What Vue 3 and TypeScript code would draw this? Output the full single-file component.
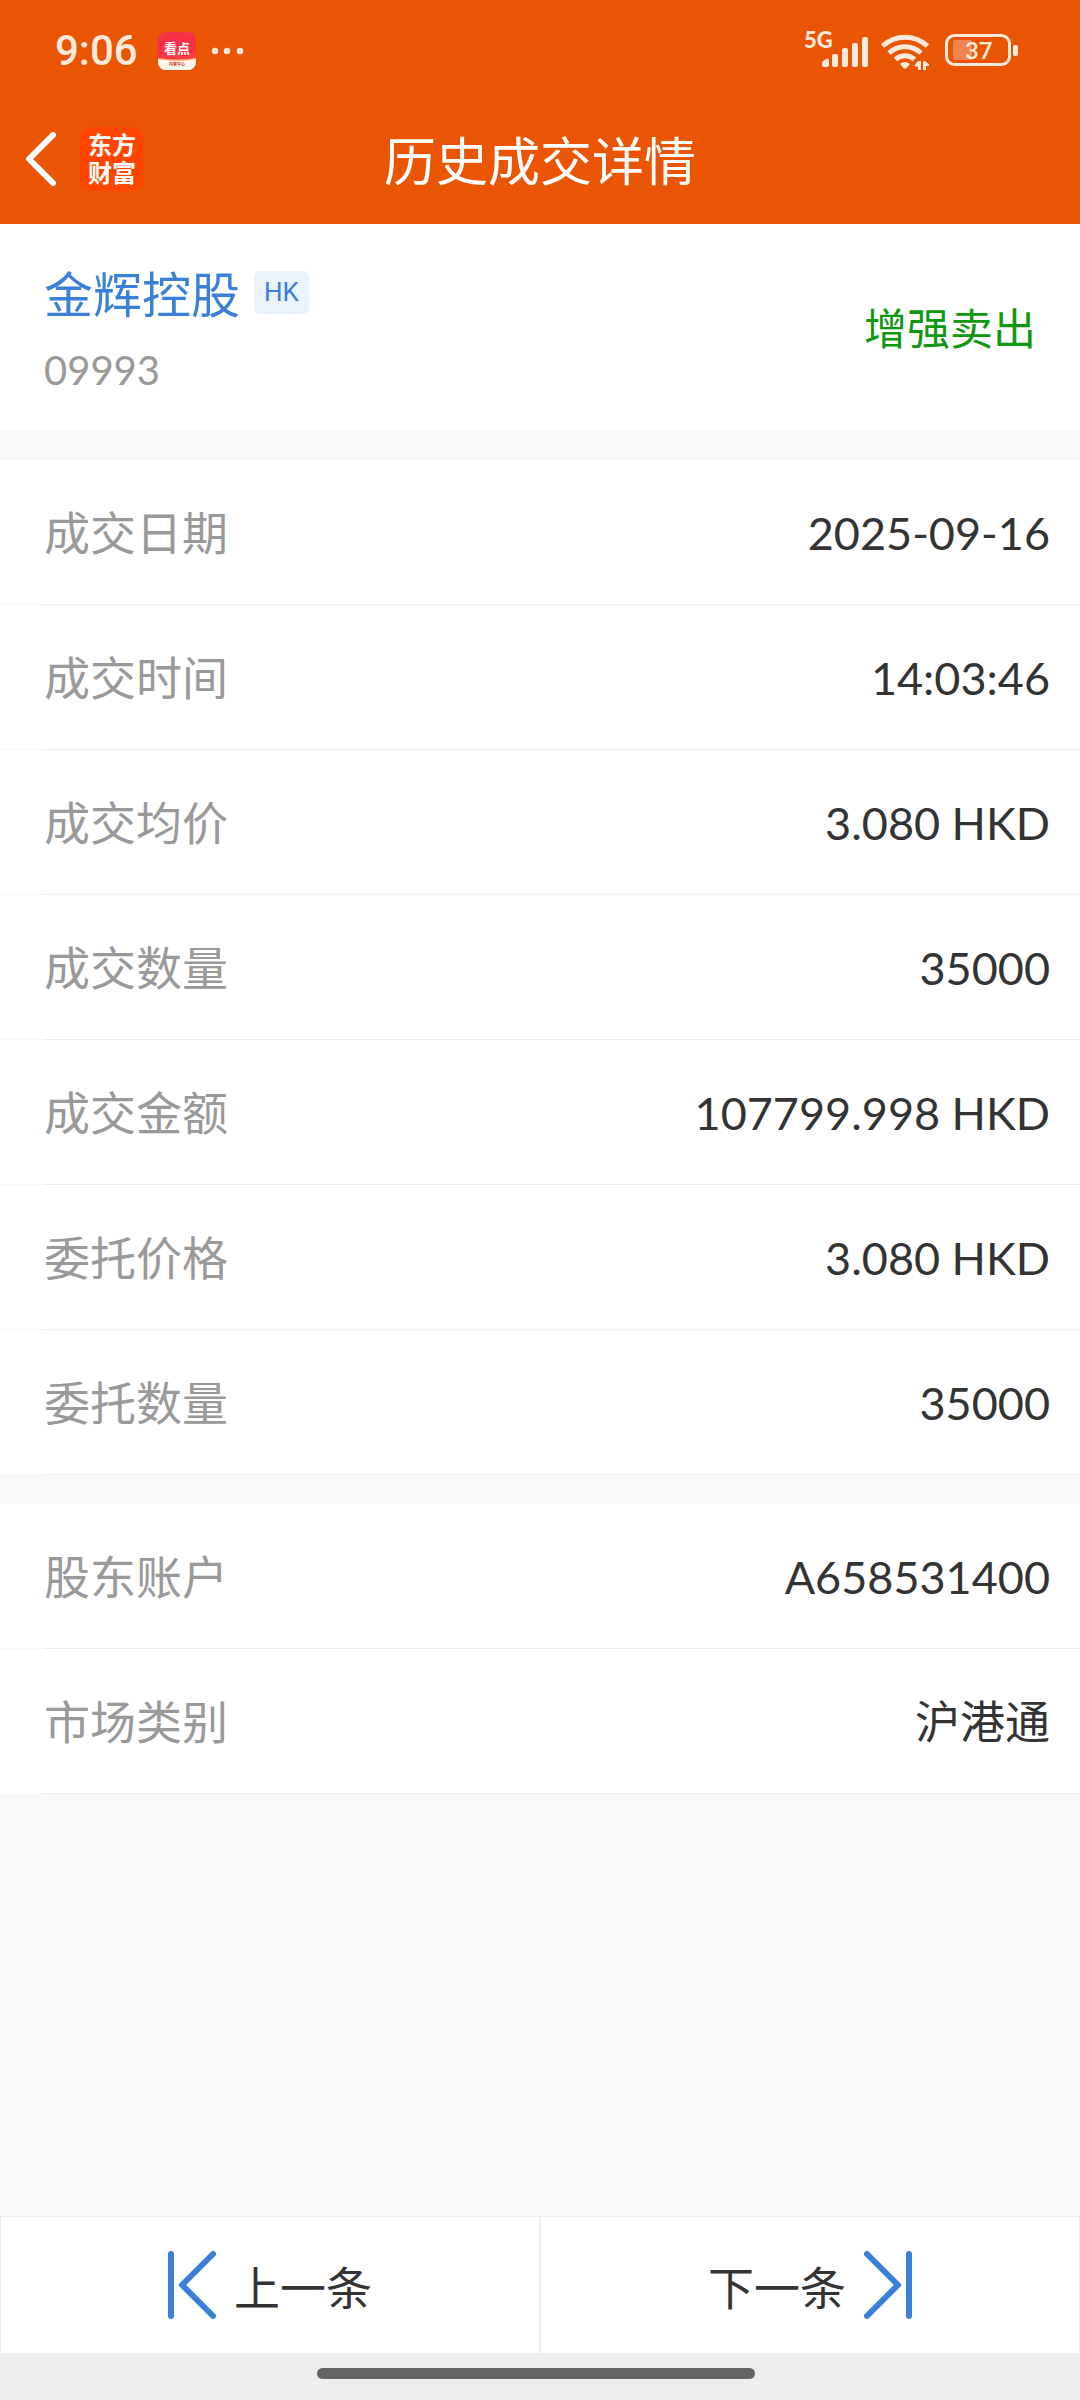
<script setup lang="ts">
interface Field {
  label: string
  value: string
}

const groups: Field[][] = [
  [
    { label: '成交日期', value: '2025-09-16' },
    { label: '成交时间', value: '14:03:46' },
    { label: '成交均价', value: '3.080 HKD' },
    { label: '成交数量', value: '35000' },
    { label: '成交金额', value: '107799.998 HKD' },
    { label: '委托价格', value: '3.080 HKD' },
    { label: '委托数量', value: '35000' },
  ],
  [
    { label: '股东账户', value: 'A658531400' },
    { label: '市场类别', value: '沪港通' },
  ],
]
</script>

<template>
  <div class="page">
    <header class="top">
      <div class="status">
        <span class="clock">9:06</span>
        <svg class="news" width="38" height="38" viewBox="0 0 38 38" aria-hidden="true">
          <defs>
            <linearGradient id="news-red" x1="0" y1="0" x2="1" y2="1">
              <stop offset="0" stop-color="#f0304a" />
              <stop offset="1" stop-color="#ff4040" />
            </linearGradient>
            <clipPath id="news-clip"><rect width="38" height="38" rx="8" /></clipPath>
          </defs>
          <g clip-path="url(#news-clip)">
            <rect width="38" height="38" fill="url(#news-red)" />
            <path d="M12 0C17 7 24 10 31 1L38 0V20C28 24 10 18 0 12Z" fill="#fa2c43" opacity="0.6" />
            <path d="M0 26Q19 29 38 26V38H0Z" fill="#ffb46a" />
            <path d="M0 27Q19 31 38 27V38H0Z" fill="#fff6ee" />
          </g>
          <text x="19" y="21" class="news-title">看点</text>
          <text x="19" y="34" class="news-sub">内容中心</text>
        </svg>
        <svg class="dots" width="34" height="8" viewBox="0 0 34 8" aria-hidden="true">
          <circle cx="4" cy="4" r="3.2" />
          <circle cx="16" cy="4" r="3.2" />
          <circle cx="29" cy="4" r="3.2" />
        </svg>
        <span class="spacer"></span>
        <svg class="signal" width="66" height="38" viewBox="0 0 66 38" aria-label="5G">
          <text x="0" y="16" class="net">5G</text>
          <path d="M18 33V31Q18 30 19 29L23 26.500Q25 26 25 28V33Q25 35 23 35H20Q18 35 18 33Z" />
          <rect x="28" y="22" width="6" height="13" rx="2" />
          <rect x="38" y="16" width="6" height="19" rx="2" />
          <rect x="48" y="11" width="6" height="24" rx="2" />
          <rect x="58" y="5" width="6" height="30" rx="2" />
        </svg>
        <svg class="wifi" width="50" height="38" viewBox="0 0 50 38" aria-hidden="true">
          <g fill="none" stroke="#feeadd" stroke-width="5">
            <path d="M2.500 14A33 33 0 0 1 47.500 14" />
            <path d="M9 21A23.500 23.500 0 0 1 41 21" />
            <path d="M15.500 27.500A14 14 0 0 1 34.500 27.500" />
          </g>
          <path d="M20 32Q25 28 30 32L26.500 36Q25 37.500 23.500 36Z" />
          <path d="M38 29H41V38H38V35L34 34ZM43 29H45L49 32.500V34H46V38H43Z" />
        </svg>
        <svg class="battery" width="74" height="34" viewBox="0 0 74 34" aria-label="37%">
          <rect x="1.500" y="1.500" width="63" height="29" rx="8" fill="none" stroke="#feeadd" stroke-width="3" />
          <path d="M10 6H27V26H10Q8 26 8 24V8Q8 6 10 6Z" fill="#f38650" />
          <rect x="68" y="11" width="5" height="11" rx="2" />
          <text x="34" y="25" class="level">37</text>
        </svg>
      </div>

      <div class="nav">
        <div class="nav-side">
          <button class="back" type="button" aria-label="返回">
            <svg width="32" height="54" viewBox="0 0 32 54" aria-hidden="true">
              <path d="M28 3L4 27L28 51" fill="none" stroke="#fff" stroke-width="6" stroke-linecap="round" stroke-linejoin="round" />
            </svg>
          </button>
          <div class="logo">东方财富</div>
        </div>
        <h1 class="title">历史成交详情</h1>
        <div class="nav-side"></div>
      </div>
    </header>

    <main class="body">
      <section class="stock">
        <div>
          <div class="name-line">
            <span class="name">金辉控股</span>
            <span class="market">HK</span>
          </div>
          <div class="code">09993</div>
        </div>
        <span class="side">增强卖出</span>
      </section>

      <dl v-for="(group, i) in groups" :key="i" class="group">
        <div v-for="field in group" :key="field.label" class="row">
          <dt>{{ field.label }}</dt>
          <dd>{{ field.value }}</dd>
        </div>
      </dl>
    </main>

    <footer class="pager">
      <button class="step" type="button">
        <svg width="48" height="72" viewBox="0 0 48 72" aria-hidden="true">
          <path d="M3 5V67M45 5L14 36L45 67" />
        </svg>
        <span>上一条</span>
      </button>
      <button class="step" type="button">
        <span>下一条</span>
        <svg width="48" height="72" viewBox="0 0 48 72" aria-hidden="true">
          <path d="M45 5V67M3 5L34 36L3 67" />
        </svg>
      </button>
    </footer>
    <div class="home"><span></span></div>
  </div>
</template>

<style>
body {
  margin: 0;
  background: #f7f8fa;
}
</style>

<style scoped>
.page {
  display: flex;
  flex-direction: column;
  min-height: 100vh;
  background: #f7f8fa;
  color: #333;
  font-family: "Noto Sans CJK SC", "Noto Sans", sans-serif;
  font-size: 46px;
}

.clock,
.level,
.market {
  font-family: Roboto, "Noto Sans CJK SC", sans-serif;
}

.code,
dd {
  font-family: Lato, "Noto Sans CJK SC", sans-serif;
}

.top {
  background: #ea5504;
  color: #fff;
}

.status {
  box-sizing: border-box;
  display: flex;
  align-items: center;
  height: 96px;
  padding: 6px 61px 0 55px;
  color: #feeadd;
}

.status svg {
  flex: none;
  overflow: visible;
  fill: #feeadd;
}

.clock {
  font-size: 42px;
  font-weight: 500;
  line-height: 60px;
}

.news {
  margin-left: 20px;
}

.status .news-title {
  fill: #fff;
  font-size: 13px;
  font-weight: 700;
  text-anchor: middle;
}

.status .news-sub {
  fill: #c8372d;
  font-size: 4px;
  font-weight: 700;
  text-anchor: middle;
}

.dots {
  margin-left: 15px;
}

.spacer {
  flex: 1;
}

.net {
  font-family: Lato, sans-serif;
  font-size: 22px;
  font-weight: 900;
}

.wifi {
  margin-left: 10px;
}

.battery {
  margin-left: 15px;
}

.level {
  font-size: 24px;
  font-weight: 500;
  text-anchor: middle;
}

.nav {
  box-sizing: border-box;
  display: flex;
  align-items: center;
  height: 128px;
  padding-bottom: 3px;
}

.nav-side {
  display: flex;
  flex: 1;
  align-items: center;
  gap: 23px;
  padding-left: 25px;
}

.nav-side:last-child {
  padding: 0 25px 0 0;
}

.back {
  display: flex;
  padding: 0;
  border: 0;
  background: none;
}

.logo {
  box-sizing: border-box;
  width: 64px;
  height: 64px;
  padding: 3px 8px;
  border-radius: 12px;
  background: #ff4600;
  font-size: 24px;
  font-weight: 700;
  line-height: 28px;
}

.title {
  margin: 0;
  font-size: 52px;
  font-weight: 400;
  line-height: 76px;
}

.body {
  flex: 1;
}

.stock {
  display: flex;
  align-items: center;
  justify-content: space-between;
  padding: 32px 44px 36px;
  background: #fff;
}

.name-line {
  display: flex;
  align-items: center;
  gap: 14px;
}

.name {
  color: #3a7fd8;
  font-size: 49px;
  line-height: 72px;
}

.market {
  padding: 0 10px;
  border-radius: 6px;
  background: #eaf2fc;
  color: #3a7fd8;
  font-size: 26px;
  line-height: 43px;
}

.code {
  margin-top: 17px;
  color: #999;
  font-size: 40px;
  line-height: 50px;
}

.side {
  color: #0f980f;
  font-size: 43px;
}

.group {
  margin: 29px 0 0;
}

.row {
  display: flex;
  align-items: baseline;
  justify-content: space-between;
  height: 145px;
  padding: 0 30px 0 44px;
  box-sizing: border-box;
  line-height: 141px;
  background:
    linear-gradient(#ebecee, #ebecee) 43px 100% / 100% 1px no-repeat,
    linear-gradient(#fff, #fff) 0 0 / 100% calc(100% - 1px) no-repeat;
}

dt {
  color: #999;
}

dd {
  margin: 0;
  font-size: 45px;
}

.pager {
  display: flex;
}

.step {
  display: flex;
  flex: 1;
  align-items: center;
  justify-content: center;
  gap: 18px;
  height: 137px;
  padding: 0;
  border: solid #ededed;
  border-width: 1px 1px 0;
  background: #fff;
  color: #333;
  font: inherit;
}

.step svg {
  fill: none;
  stroke: #3a7fd8;
  stroke-width: 6;
  stroke-linecap: round;
  stroke-linejoin: round;
}

.home {
  box-sizing: border-box;
  display: flex;
  align-items: center;
  justify-content: center;
  height: 47px;
  padding: 0 8px 6px 0;
  background: #ededed;
}

.home span {
  width: 438px;
  height: 11px;
  border-radius: 6px;
  background: #646464;
}
</style>
